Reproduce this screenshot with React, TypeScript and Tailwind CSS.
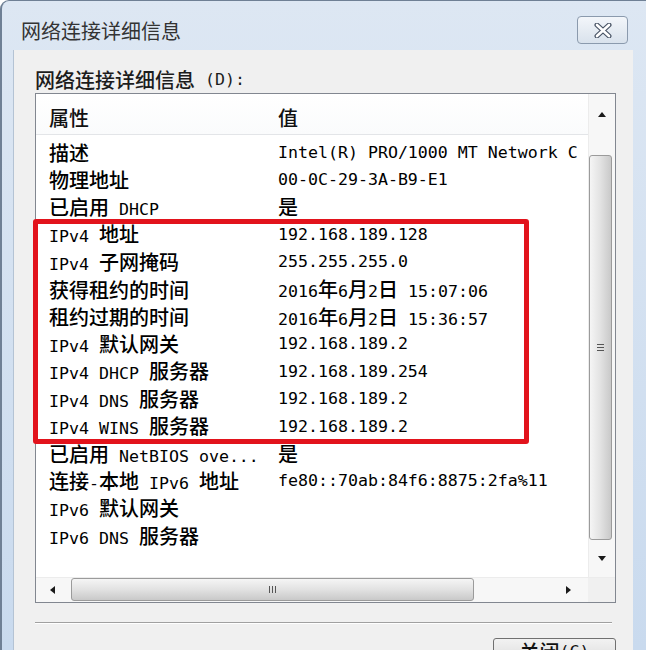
import React from "react";

const CJK = /[\u3000-\u9fff\uff00-\uffef]/;

// split into CJK / latin runs so each gets the SimSun-like 2:1 width ratio
function Mixed({ text }: { text: string }) {
  const parts: { cjk: boolean; s: string }[] = [];
  for (const ch of text) {
    const cjk = CJK.test(ch);
    const last = parts[parts.length - 1];
    if (last && last.cjk === cjk) last.s += ch;
    else parts.push({ cjk, s: ch });
  }
  return (
    <>
      {parts.map((p, i) => (
        <span
          key={i}
          className={
            p.cjk
              ? "font-['Noto_Sans_CJK_SC',sans-serif] text-[20px] font-medium"
              : "font-['DejaVu_Sans_Mono','Liberation_Mono',monospace] text-[16.6px]"
          }
        >
          {p.s}
        </span>
      ))}
    </>
  );
}

const rows: [string, string][] = [
  ["描述", "Intel(R) PRO/1000 MT Network Connection"],
  ["物理地址", "00-0C-29-3A-B9-E1"],
  ["已启用 DHCP", "是"],
  ["IPv4 地址", "192.168.189.128"],
  ["IPv4 子网掩码", "255.255.255.0"],
  ["获得租约的时间", "2016年6月2日 15:07:06"],
  ["租约过期的时间", "2016年6月2日 15:36:57"],
  ["IPv4 默认网关", "192.168.189.2"],
  ["IPv4 DHCP 服务器", "192.168.189.254"],
  ["IPv4 DNS 服务器", "192.168.189.2"],
  ["IPv4 WINS 服务器", "192.168.189.2"],
  ["已启用 NetBIOS ove...", "是"],
  ["连接-本地 IPv6 地址", "fe80::70ab:84f6:8875:2fa%11"],
  ["IPv6 默认网关", ""],
  ["IPv6 DNS 服务器", ""],
];

function Arrow({ dir }: { dir: "up" | "down" | "left" | "right" }) {
  const pts = {
    up: "1,6 5,1 9,6",
    down: "1,1 9,1 5,6",
    left: "6,1 6,9 1,5",
    right: "1,1 1,9 6,5",
  }[dir];
  const vertical = dir === "up" || dir === "down";
  return (
    <svg width={vertical ? 10 : 7} height={vertical ? 7 : 10} viewBox={vertical ? "0 0 10 7" : "0 0 7 10"}>
      <polygon points={pts} fill="#1a1a1a" />
    </svg>
  );
}

export default function App() {
  return (
    <div className="relative w-[646px] h-[650px] overflow-hidden flex flex-col bg-gradient-to-b from-[#dde7f3] to-[#c9daee] border-l-2 border-t border-[#6f8095] rounded-tl-[9px]">
      {/* Title bar */}
      <div className="h-[49px] shrink-0 flex items-center justify-between pt-[10px] pl-[19px] pr-[18px]">
        <div className="font-['Noto_Sans_CJK_SC',sans-serif] text-[20px] text-[#333]">网络连接详细信息</div>
        <div className="w-[51px] h-[28px] -mt-[1px] rounded-[4px] border border-[#8b9aad] bg-gradient-to-b from-[#f3f6fa] to-[#d9e2ec] flex items-center justify-center">
          <svg width="20" height="15" viewBox="0 0 20 15">
            <path d="M4 2 L16 13 M16 2 L4 13" stroke="#4a5566" strokeWidth="5" strokeLinecap="round" />
            <path d="M4 2 L16 13 M16 2 L4 13" stroke="#ffffff" strokeWidth="2.6" strokeLinecap="round" />
          </svg>
        </div>
      </div>

      {/* Client area */}
      <div className="flex-1 ml-[11px] mr-[13px] bg-[#f0f0f0] border-l border-[#b4c3d4] pt-[17px] pl-[21px] pr-[17px] flex flex-col">
        <div className="h-[26px] flex items-center text-[#1c1c1c] whitespace-pre">
          <Mixed text="网络连接详细信息 (D):" />
        </div>

        {/* List view */}
        <div className="h-[510px] border border-[#828790] bg-white flex flex-col">
          <div className="flex-1 flex min-h-0">
            <div className="flex-1 min-w-0 overflow-hidden">
              <div className="h-[41px] pt-[8px] grid grid-cols-[242px_1fr] items-center border-b border-[#e3e5e8] bg-gradient-to-b from-white to-[#fafbfc] text-[#111]">
                <div className="pl-[13px]">
                  <Mixed text="属性" />
                </div>
                <div>
                  <Mixed text="值" />
                </div>
              </div>
              <div className="pt-[4px]">
                {rows.map(([k, v]) => (
                  <div key={k} className="h-[27.4px] grid grid-cols-[242px_299px] items-center text-black whitespace-pre">
                    <div className="pl-[13px] overflow-hidden">
                      <Mixed text={k} />
                    </div>
                    <div className="overflow-hidden">
                      <Mixed text={v} />
                    </div>
                  </div>
                ))}
              </div>
            </div>

            {/* Vertical scrollbar */}
            <div className="w-[27px] shrink-0 bg-[#f7f7f7] border-l border-[#ececec] flex flex-col">
              <div className="h-[40px] flex items-center justify-center pt-[1px]">
                <Arrow dir="up" />
              </div>
              <div className="h-[21px]" />
              <div className="h-[385px] mr-[3px] rounded-[3px] border border-[#9b9b9b] bg-gradient-to-r from-[#f5f5f5] via-[#e2e2e2] to-[#c9c9c9] flex flex-col items-center justify-center gap-[2px]">
                <div className="w-[7px] h-[1px] bg-[#555]" />
                <div className="w-[7px] h-[1px] bg-[#555]" />
                <div className="w-[7px] h-[1px] bg-[#555]" />
              </div>
              <div className="flex-1 flex items-center justify-center pr-[1px]">
                <Arrow dir="down" />
              </div>
            </div>
          </div>

          {/* Horizontal scrollbar */}
          <div className="h-[25px] shrink-0 flex bg-[#f7f7f7] border-t border-[#ececec]">
            <div className="w-[32px] flex items-center justify-center">
              <Arrow dir="left" />
            </div>
            <div className="w-[403px] ml-[3px] mb-[1px] rounded-[3px] border border-[#9b9b9b] bg-gradient-to-b from-[#f5f5f5] via-[#e2e2e2] to-[#c9c9c9] flex items-center justify-center gap-[2px]">
              <div className="w-[1px] h-[7px] bg-[#555]" />
              <div className="w-[1px] h-[7px] bg-[#555]" />
              <div className="w-[1px] h-[7px] bg-[#555]" />
            </div>
            <div className="flex-1" />
            <div className="w-[40px] flex items-center justify-center">
              <Arrow dir="right" />
            </div>
            <div className="w-[27px] bg-[#f0f0f0]" />
          </div>
        </div>

        {/* Separator */}
        <div className="mt-[19px] mr-[4px] h-[1px] bg-[#a0a0a0] border-b border-white box-content" />

        {/* Button */}
        <div className="mt-[14px] flex justify-end">
          <div className="w-[123px] h-[28px] rounded-[3px] border border-[#707070] bg-gradient-to-b from-[#f2f2f2] via-[#e6e6e6] to-[#d2d2d2] flex items-center justify-center text-[#111] whitespace-pre">
            <Mixed text="关闭(C)" />
          </div>
        </div>
      </div>

      {/* Red annotation box */}
      <div className="absolute left-[31px] top-[218px] w-[496px] h-[225px] border-[5px] border-[#e2131c] rounded-[3px] pointer-events-none" />
    </div>
  );
}
